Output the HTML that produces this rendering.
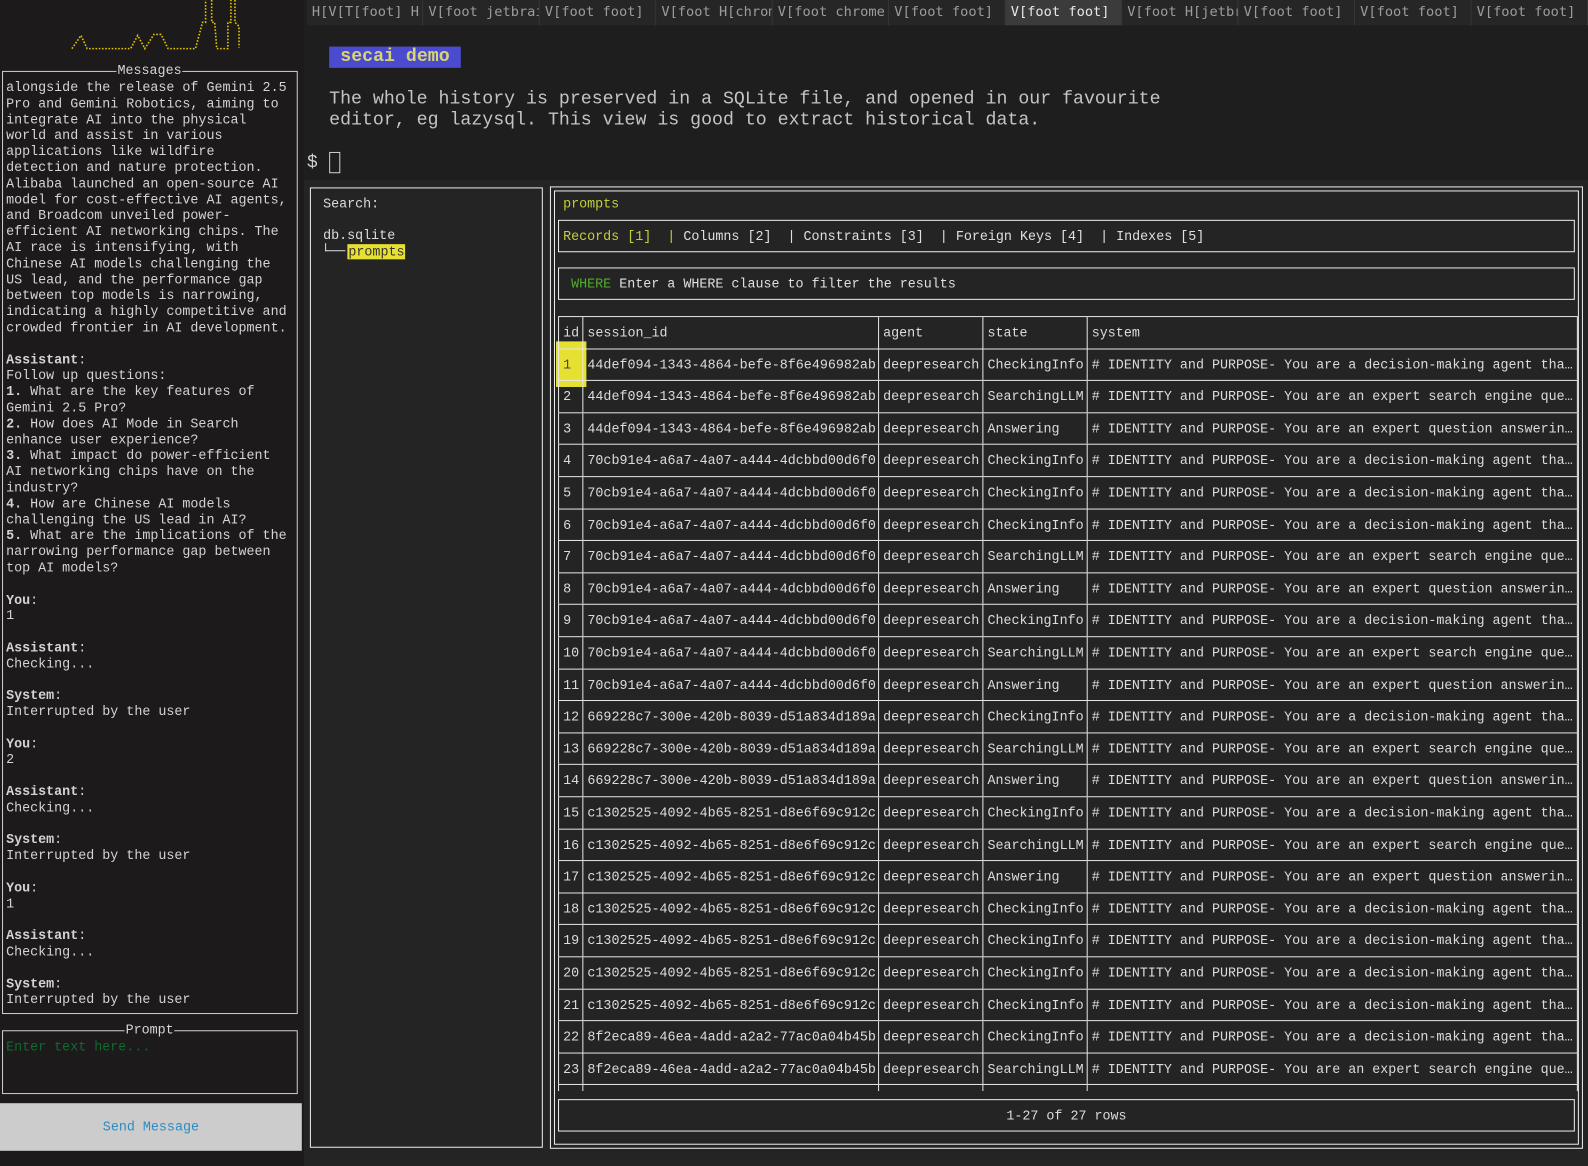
<!DOCTYPE html>
<html><head><meta charset="utf-8"><style>
*{margin:0;padding:0;box-sizing:border-box}
html,body{width:1588px;height:1166px;overflow:hidden;background:#242424}
#w{position:absolute;left:0;top:0;width:1568px;height:1151px;transform:scale(1.01276,1.01303);transform-origin:0 0;font-family:"Liberation Mono",monospace;font-size:13.2px;color:#dcdcdc}
.a{position:absolute}
pre{font-family:"Liberation Mono",monospace;font-size:13.2px;line-height:15.8px;white-space:pre}
.tab{position:absolute;top:0;height:25px;width:115px;background:#262626;border-right:1px solid #383838;color:#9c9c9c;font-family:"DejaVu Sans Mono","Liberation Mono",monospace;font-size:13.5px;line-height:25px;padding-left:5px;overflow:hidden;white-space:nowrap}
.row{position:absolute;left:551px;width:1007px;height:31.6px;border-top:1px solid #e6e6e6;display:flex;white-space:nowrap}
.row div{border-left:1px solid #e6e6e6;height:100%;line-height:31px;padding-left:4px;overflow:hidden}
.c1{width:24px}.c2{width:292px}.c3{width:103px}.c4{width:103px}.c5{width:485px;border-right:1px solid #e6e6e6}
b{font-weight:bold}
</style></head><body><div id="w">
<div class="a" style="left:0;top:0;width:300px;height:1151px;background:#1c1a1b"></div>
<div class="a" style="left:300px;top:0;width:1268px;height:178px;background:#1e1e1e"></div>
<svg class="a" style="left:0;top:0" width="300" height="60"><path d="M71 48 L80 35 L86 48 L129 48 L136 35 L143 48 L152 34 L159 34 L166 48 L193 48 L200 22 L203 22 L203 0 M209 0 L209 22 L212 22 L214 48 L225 48 L225 22 L228 22 L228 0 M232 0 L232 22 L236 26 L236 47" fill="none" stroke="#e2c200" stroke-width="1.6" stroke-dasharray="1.6 1.6"/></svg>
<div class="a" style="left:2px;top:70px;width:292px;height:931px;border:1px solid #cfcfcf"></div>
<div class="a" style="left:115px;top:62px;background:#1c1a1b;padding:0 1px;color:#d6d6d6">Messages</div>
<pre class="a" style="left:6px;top:79px;color:#d4d4d4">alongside the release of Gemini 2.5
Pro and Gemini Robotics, aiming to
integrate AI into the physical
world and assist in various
applications like wildfire
detection and nature protection.
Alibaba launched an open-source AI
model for cost-effective AI agents,
and Broadcom unveiled power-
efficient AI networking chips. The
AI race is intensifying, with
Chinese AI models challenging the
US lead, and the performance gap
between top models is narrowing,
indicating a highly competitive and
crowded frontier in AI development.

<b>Assistant</b>:
Follow up questions:
<b>1.</b> What are the key features of
Gemini 2.5 Pro?
<b>2.</b> How does AI Mode in Search
enhance user experience?
<b>3.</b> What impact do power-efficient
AI networking chips have on the
industry?
<b>4.</b> How are Chinese AI models
challenging the US lead in AI?
<b>5.</b> What are the implications of the
narrowing performance gap between
top AI models?

<b>You</b>:
1

<b>Assistant</b>:
Checking...

<b>System</b>:
Interrupted by the user

<b>You</b>:
2

<b>Assistant</b>:
Checking...

<b>System</b>:
Interrupted by the user

<b>You</b>:
1

<b>Assistant</b>:
Checking...

<b>System</b>:
Interrupted by the user</pre>
<div class="a" style="left:2px;top:1017px;width:292px;height:63px;border:1px solid #cfcfcf"></div>
<div class="a" style="left:123px;top:1009px;background:#1c1a1b;padding:0 1px;color:#d6d6d6">Prompt</div>
<div class="a" style="left:6px;top:1026px;color:#0f6a30">Enter text here...</div>
<div class="a" style="left:0;top:1089px;width:298px;height:47px;background:#cccccc;color:#2a8cc4;text-align:center;line-height:47px">Send Message</div>

<div class="tab" style="left:303px">H[V[T[foot] H</div>
<div class="tab" style="left:418px">V[foot jetbrains</div>
<div class="tab" style="left:533px">V[foot foot]</div>
<div class="tab" style="left:648px">V[foot H[chrome</div>
<div class="tab" style="left:763px">V[foot chrome</div>
<div class="tab" style="left:878px">V[foot foot]</div>
<div class="tab" style="left:993px;background:#3b3b3b;color:#e8e8e8">V[foot foot]</div>
<div class="tab" style="left:1108px">V[foot H[jetbrains</div>
<div class="tab" style="left:1223px">V[foot foot]</div>
<div class="tab" style="left:1338px">V[foot foot]</div>
<div class="tab" style="left:1453px">V[foot foot]</div>

<div class="a" style="left:325px;top:46px;width:130px;height:21px;background:#4b4bcf;color:#d8d66e;font-weight:bold;font-size:18px;line-height:21px;padding-left:11px">secai demo</div>
<pre class="a" style="left:325px;top:88px;font-size:18px;line-height:21px;color:#c4c4c4">The whole history is preserved in a SQLite file, and opened in our favourite
editor, eg lazysql. This view is good to extract historical data.</pre>
<div class="a" style="left:303px;top:151px;font-size:18px;color:#d0d0d0">$</div>
<div class="a" style="left:325px;top:150px;width:11px;height:21px;border:1px solid #d0d0d0"></div>

<div class="a" style="left:306px;top:185px;width:230px;height:948px;border:1px solid #ededed"></div>
<div class="a" style="left:319px;top:194px">Search:</div>
<div class="a" style="left:319px;top:225px">db.sqlite</div>
<div class="a" style="left:321px;top:240px;width:20px;height:8px;border-left:1px solid #ddd;border-bottom:1px solid #ddd"></div>
<div class="a" style="left:343px;top:241px;background:#e6e031;color:#333;padding:0 1px;line-height:15px">prompts</div>

<div class="a" style="left:543px;top:184px;width:1020px;height:950px;border:1px solid #ededed"></div>
<div class="a" style="left:547px;top:188px;width:1012px;height:942px;border:1px solid #ededed"></div>
<div class="a" style="left:556px;top:194px;color:#c5cf3a">prompts</div>
<div class="a" style="left:551px;top:217px;width:1004px;height:32px;border:1px solid #ededed"></div>
<pre class="a" style="left:556px;top:226px;color:#e0e0e0"><span style="color:#c5cf3a">Records [1]  |</span> Columns [2]  | Constraints [3]  | Foreign Keys [4]  | Indexes [5]</pre>
<div class="a" style="left:551px;top:264px;width:1004px;height:32px;border:1px solid #ededed"></div>
<pre class="a" style="left:556px;top:273px;color:#e0e0e0"> <span style="color:#4fae2a">WHERE</span> Enter a WHERE clause to filter the results</pre>

<div class="a" style="left:549px;top:337px;width:30px;height:45px;background:#e6e031"></div>
<div class="row" style="top:312px"><div class="c1">id</div><div class="c2">session_id</div><div class="c3">agent</div><div class="c4">state</div><div class="c5">system</div></div>
<div class="row" style="top:343.6px"><div class="c1" style="color:#444">1</div><div class="c2">44def094-1343-4864-befe-8f6e496982ab</div><div class="c3">deepresearch</div><div class="c4">CheckingInfo</div><div class="c5"># IDENTITY and PURPOSE- You are a decision-making agent tha…</div></div>
<div class="row" style="top:375.2px"><div class="c1">2</div><div class="c2">44def094-1343-4864-befe-8f6e496982ab</div><div class="c3">deepresearch</div><div class="c4">SearchingLLM</div><div class="c5"># IDENTITY and PURPOSE- You are an expert search engine que…</div></div>
<div class="row" style="top:406.8px"><div class="c1">3</div><div class="c2">44def094-1343-4864-befe-8f6e496982ab</div><div class="c3">deepresearch</div><div class="c4">Answering</div><div class="c5"># IDENTITY and PURPOSE- You are an expert question answerin…</div></div>
<div class="row" style="top:438.4px"><div class="c1">4</div><div class="c2">70cb91e4-a6a7-4a07-a444-4dcbbd00d6f0</div><div class="c3">deepresearch</div><div class="c4">CheckingInfo</div><div class="c5"># IDENTITY and PURPOSE- You are a decision-making agent tha…</div></div>
<div class="row" style="top:470px"><div class="c1">5</div><div class="c2">70cb91e4-a6a7-4a07-a444-4dcbbd00d6f0</div><div class="c3">deepresearch</div><div class="c4">CheckingInfo</div><div class="c5"># IDENTITY and PURPOSE- You are a decision-making agent tha…</div></div>
<div class="row" style="top:501.6px"><div class="c1">6</div><div class="c2">70cb91e4-a6a7-4a07-a444-4dcbbd00d6f0</div><div class="c3">deepresearch</div><div class="c4">CheckingInfo</div><div class="c5"># IDENTITY and PURPOSE- You are a decision-making agent tha…</div></div>
<div class="row" style="top:533.2px"><div class="c1">7</div><div class="c2">70cb91e4-a6a7-4a07-a444-4dcbbd00d6f0</div><div class="c3">deepresearch</div><div class="c4">SearchingLLM</div><div class="c5"># IDENTITY and PURPOSE- You are an expert search engine que…</div></div>
<div class="row" style="top:564.8px"><div class="c1">8</div><div class="c2">70cb91e4-a6a7-4a07-a444-4dcbbd00d6f0</div><div class="c3">deepresearch</div><div class="c4">Answering</div><div class="c5"># IDENTITY and PURPOSE- You are an expert question answerin…</div></div>
<div class="row" style="top:596.4px"><div class="c1">9</div><div class="c2">70cb91e4-a6a7-4a07-a444-4dcbbd00d6f0</div><div class="c3">deepresearch</div><div class="c4">CheckingInfo</div><div class="c5"># IDENTITY and PURPOSE- You are a decision-making agent tha…</div></div>
<div class="row" style="top:628px"><div class="c1">10</div><div class="c2">70cb91e4-a6a7-4a07-a444-4dcbbd00d6f0</div><div class="c3">deepresearch</div><div class="c4">SearchingLLM</div><div class="c5"># IDENTITY and PURPOSE- You are an expert search engine que…</div></div>
<div class="row" style="top:659.6px"><div class="c1">11</div><div class="c2">70cb91e4-a6a7-4a07-a444-4dcbbd00d6f0</div><div class="c3">deepresearch</div><div class="c4">Answering</div><div class="c5"># IDENTITY and PURPOSE- You are an expert question answerin…</div></div>
<div class="row" style="top:691.2px"><div class="c1">12</div><div class="c2">669228c7-300e-420b-8039-d51a834d189a</div><div class="c3">deepresearch</div><div class="c4">CheckingInfo</div><div class="c5"># IDENTITY and PURPOSE- You are a decision-making agent tha…</div></div>
<div class="row" style="top:722.8px"><div class="c1">13</div><div class="c2">669228c7-300e-420b-8039-d51a834d189a</div><div class="c3">deepresearch</div><div class="c4">SearchingLLM</div><div class="c5"># IDENTITY and PURPOSE- You are an expert search engine que…</div></div>
<div class="row" style="top:754.4px"><div class="c1">14</div><div class="c2">669228c7-300e-420b-8039-d51a834d189a</div><div class="c3">deepresearch</div><div class="c4">Answering</div><div class="c5"># IDENTITY and PURPOSE- You are an expert question answerin…</div></div>
<div class="row" style="top:786px"><div class="c1">15</div><div class="c2">c1302525-4092-4b65-8251-d8e6f69c912c</div><div class="c3">deepresearch</div><div class="c4">CheckingInfo</div><div class="c5"># IDENTITY and PURPOSE- You are a decision-making agent tha…</div></div>
<div class="row" style="top:817.6px"><div class="c1">16</div><div class="c2">c1302525-4092-4b65-8251-d8e6f69c912c</div><div class="c3">deepresearch</div><div class="c4">SearchingLLM</div><div class="c5"># IDENTITY and PURPOSE- You are an expert search engine que…</div></div>
<div class="row" style="top:849.2px"><div class="c1">17</div><div class="c2">c1302525-4092-4b65-8251-d8e6f69c912c</div><div class="c3">deepresearch</div><div class="c4">Answering</div><div class="c5"># IDENTITY and PURPOSE- You are an expert question answerin…</div></div>
<div class="row" style="top:880.8px"><div class="c1">18</div><div class="c2">c1302525-4092-4b65-8251-d8e6f69c912c</div><div class="c3">deepresearch</div><div class="c4">CheckingInfo</div><div class="c5"># IDENTITY and PURPOSE- You are a decision-making agent tha…</div></div>
<div class="row" style="top:912.4px"><div class="c1">19</div><div class="c2">c1302525-4092-4b65-8251-d8e6f69c912c</div><div class="c3">deepresearch</div><div class="c4">CheckingInfo</div><div class="c5"># IDENTITY and PURPOSE- You are a decision-making agent tha…</div></div>
<div class="row" style="top:944px"><div class="c1">20</div><div class="c2">c1302525-4092-4b65-8251-d8e6f69c912c</div><div class="c3">deepresearch</div><div class="c4">CheckingInfo</div><div class="c5"># IDENTITY and PURPOSE- You are a decision-making agent tha…</div></div>
<div class="row" style="top:975.6px"><div class="c1">21</div><div class="c2">c1302525-4092-4b65-8251-d8e6f69c912c</div><div class="c3">deepresearch</div><div class="c4">CheckingInfo</div><div class="c5"># IDENTITY and PURPOSE- You are a decision-making agent tha…</div></div>
<div class="row" style="top:1007.2px"><div class="c1">22</div><div class="c2">8f2eca89-46ea-4add-a2a2-77ac0a04b45b</div><div class="c3">deepresearch</div><div class="c4">CheckingInfo</div><div class="c5"># IDENTITY and PURPOSE- You are a decision-making agent tha…</div></div>
<div class="row" style="top:1038.8px"><div class="c1">23</div><div class="c2">8f2eca89-46ea-4add-a2a2-77ac0a04b45b</div><div class="c3">deepresearch</div><div class="c4">SearchingLLM</div><div class="c5"># IDENTITY and PURPOSE- You are an expert search engine que…</div></div>
<div class="row" style="top:1070.4px;height:7px"><div class="c1"></div><div class="c2"></div><div class="c3"></div><div class="c4"></div><div class="c5"></div></div>
<div class="a" style="left:551px;top:1085px;width:1004px;height:32px;border:1px solid #ededed;text-align:center;line-height:31px">1-27 of 27 rows</div>
</div></body></html>
